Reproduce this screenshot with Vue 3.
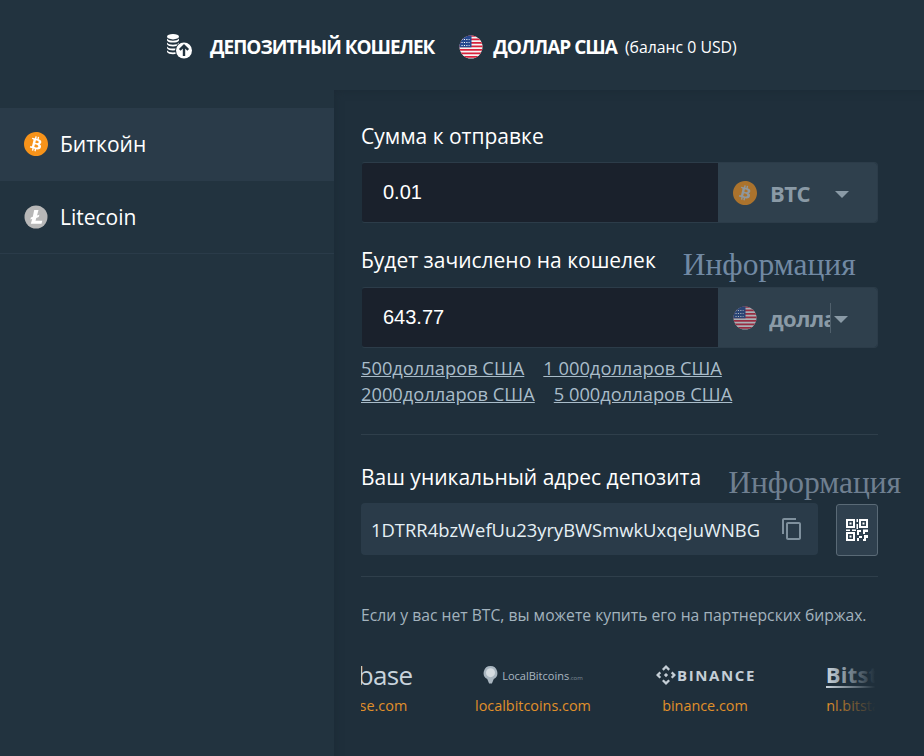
<script setup>
const exchanges = [
  { key: 'coinbase', url: 'coinbase.com' },
  { key: 'local', url: 'localbitcoins.com' },
  { key: 'binance', url: 'binance.com' },
  { key: 'bitstamp', url: 'nl.bitstamp.net' }
]
const stripes = [0, 1, 2, 3, 4, 5, 6]
const btc = 'M23.638 14.904c-1.602 6.43-8.113 10.34-14.542 8.736C2.67 22.05-1.244 15.525.362 9.105 1.962 2.67 8.475-1.243 14.9.358c6.43 1.605 10.342 8.115 8.738 14.548v-.002zm-6.35-4.613c.24-1.59-.974-2.45-2.64-3.03l.54-2.153-1.315-.33-.525 2.107c-.345-.087-.705-.167-1.064-.25l.526-2.127-1.32-.33-.54 2.165c-.285-.067-.565-.132-.84-.2l-1.815-.45-.35 1.407s.975.225.955.236c.535.136.63.486.615.766l-1.477 5.92c-.075.166-.24.406-.614.314.015.02-.96-.24-.96-.24l-.66 1.51 1.71.426.93.242-.54 2.19 1.32.327.54-2.17c.36.1.705.19 1.05.273l-.51 2.154 1.32.33.545-2.19c2.24.427 3.93.257 4.64-1.774.57-1.637-.03-2.58-1.217-3.196.854-.193 1.5-.76 1.68-1.93h.01zm-3.01 4.22c-.404 1.64-3.157.75-4.05.53l.72-2.9c.896.23 3.757.67 3.33 2.37zm.41-4.24c-.37 1.49-2.662.735-3.405.55l.654-2.64c.744.18 3.137.524 2.75 2.084v.006z'
</script>

<template>
  <div class="page">
    <header class="top">
      <svg class="coins" viewBox="0 0 26 26" width="26" height="26">
        <g fill="#fff">
          <ellipse cx="7" cy="2.700" rx="6" ry="2.700" />
          <path d="M1 4.600c1 1.500 3.200 2.200 6 2.200s5-.7 6-2.200v1.800c-1 1.500-3.200 2.200-6 2.200s-5-.7-6-2.200z" />
          <path d="M1 8.500c1 1.500 3.200 2.200 6 2.200s5-.7 6-2.200v1.800c-1 1.500-3.200 2.200-6 2.200s-5-.7-6-2.200z" />
          <path d="M1 12.400c1 1.500 3.200 2.200 6 2.200s5-.7 6-2.200v1.800c-1 1.500-3.200 2.200-6 2.200s-5-.7-6-2.200z" />
          <path d="M1 16.300c1 1.500 3.200 2.200 6 2.200s5-.7 6-2.200v1.800c-1 1.500-3.200 2.200-6 2.200s-5-.7-6-2.200z" />
        </g>
        <circle cx="18" cy="16.500" r="9" fill="#22333f" />
        <circle cx="18" cy="16.500" r="8" fill="#fff" />
        <path d="M18 22v-10M13.800 15.900l4.200-4.200 4.200 4.200" fill="none" stroke="#22333f" stroke-width="2.400" />
      </svg>
      <strong class="title">ДЕПОЗИТНЫЙ КОШЕЛЕК</strong>
      <svg class="flag" viewBox="0 0 24 24" width="24" height="24">
        <defs><clipPath id="flag-a"><circle cx="12" cy="12" r="11.500" /></clipPath></defs>
        <g clip-path="url(#flag-a)">
          <rect width="24" height="24" fill="#f5f5f5" />
          <rect v-for="s in stripes" :key="s" x="0" :y="s * 3.5" width="24" height="1.750" fill="#d8213b" />
          <rect width="12.500" height="12.300" fill="#27498f" />
          <path d="M2.500 4.500h8M2.500 7.500h8M2.500 10.500h8" stroke="#fff" stroke-width="1.100" stroke-dasharray="1.100 1.300" />
        </g>
      </svg>
      <strong class="currency">ДОЛЛАР США</strong>
      <span class="balance">(баланс 0 USD)</span>
    </header>

    <div class="body">
      <aside class="side">
        <div class="coin-row active">
          <svg viewBox="0 0 24 24" width="24" height="24">
            <circle cx="12" cy="12" r="10" fill="#fff" />
            <path :d="btc" fill="#f7931a" />
          </svg>
          <span>Биткойн</span>
        </div>
        <div class="coin-row">
          <svg viewBox="0 0 24 24" width="24" height="24">
            <circle cx="12" cy="12" r="11.500" fill="#b8b8b8" />
            <path d="M10.200 5h4.300l-1.500 5.600 2.400-.9-.7 2.300-2.400.9-.8 2.900h6.800l-.8 3H6.800l1.400-4.900-1.900.7.600-2.100 1.900-.7z" fill="#fff" />
          </svg>
          <span>Litecoin</span>
        </div>
      </aside>

      <main class="main">
        <label class="label first">Сумма к отправке</label>
        <div class="group">
          <div class="amount">0.01</div>
          <div class="picker">
            <svg viewBox="0 0 24 24" width="24" height="24">
              <circle cx="12" cy="12" r="10" fill="#c9cdd0" />
              <path :d="btc" fill="#f7931a" />
            </svg>
            <span class="code">BTC</span>
            <i class="caret"></i>
          </div>
        </div>

        <div class="label-row">
          <label class="label">Будет зачислено на кошелек</label>
          <span class="info">Информация</span>
        </div>
        <div class="group">
          <div class="amount second">643.77</div>
          <div class="picker">
            <svg viewBox="0 0 24 24" width="24" height="24">
              <defs><clipPath id="flag-b"><circle cx="12" cy="12" r="11.500" /></clipPath></defs>
              <g clip-path="url(#flag-b)">
                <rect width="24" height="24" fill="#f5f5f5" />
                <rect v-for="s in stripes" :key="s" x="0" :y="s * 3.5" width="24" height="1.750" fill="#d8213b" />
                <rect width="12.500" height="12.300" fill="#27498f" />
                <path d="M2.500 4.500h8M2.500 7.500h8M2.500 10.500h8" stroke="#fff" stroke-width="1.100" stroke-dasharray="1.100 1.300" />
              </g>
            </svg>
            <span class="code clip">долла</span>
            <i class="caret near"></i>
          </div>
        </div>

        <div class="presets">
          <div class="preset-line"><a>500долларов США</a><a>1 000долларов США</a></div>
          <div class="preset-line"><a>2000долларов США</a><a>5 000долларов США</a></div>
        </div>

        <hr class="rule one" />

        <div class="label-row third">
          <label class="label">Ваш уникальный адрес депозита</label>
          <span class="info dim">Информация</span>
        </div>
        <div class="address-row">
          <div class="address">
            <span>1DTRR4bzWefUu23yryBWSmwkUxqeJuWNBG</span>
            <svg viewBox="0 0 24 24" width="24" height="24">
              <path fill="#7f909d" d="M16 1H4c-1.100 0-2 .9-2 2v14h2V3h12V1zm3 4H8c-1.100 0-2 .9-2 2v14c0 1.100.9 2 2 2h11c1.100 0 2-.9 2-2V7c0-1.100-.9-2-2-2zm0 16H8V7h11v14z" />
            </svg>
          </div>
          <button class="qr" type="button">
            <svg viewBox="0 0 24 24" width="24" height="24" fill="#fff">
              <path fill-rule="evenodd" d="M1 1h9v9H1zm2 2v5h5V3zM14 1h9v9h-9zm2 2v5h5V3zM1 14h9v9H1zm2 2v5h5v-5z" />
              <path d="M4.500 4.500h2v2h-2zM17.500 4.500h2v2h-2zM4.500 17.500h2v2h-2zM11.500 1h1.500v3h-1.500zM11.500 6h1.500v5h-1.500zM1 11.500h4v1.500H1zM7 11.500h4v1.500H7zM12 12h4v2h-2v3h-2zM18 11.500h5v2.500h-3v2h-2zM14 18h3v2h-3zM19 17h4v3h-2v3h-3v-2h1zM12 20h2v3h-2z" />
            </svg>
          </button>
        </div>

        <hr class="rule two" />

        <p class="note">Если у вас нет BTC, вы можете купить его на партнерских биржах.</p>

        <div class="carousel">
          <div class="track">
            <div v-for="ex in exchanges" :key="ex.key" class="slide">
              <div class="logo">
                <span v-if="ex.key === 'coinbase'" class="coinbase">coinbase</span>
                <span v-else-if="ex.key === 'local'" class="local">
                  <svg viewBox="0 0 16 20" width="15" height="20">
                    <path d="M8 .5a7.300 7.300 0 0 0-3.500 13.700L6.500 19h3l2-4.800A7.300 7.300 0 0 0 8 .5z" fill="#a9b6c0" />
                    <circle cx="8" cy="7.500" r="4.800" fill="#d5dce1" />
                  </svg>
                  <span>LocalBitcoins<small>.com</small></span>
                </span>
                <span v-else-if="ex.key === 'binance'" class="binance">
                  <svg viewBox="2 2 16 16" width="20" height="20" fill="#c4ced6">
                    <path d="M10 2l3.200 3.200-1.300 1.300L10 4.600 8.100 6.500 6.800 5.200zM4.800 7.200L6.100 8.500 4.600 10l1.500 1.500-1.300 1.300L2 10zM15.200 7.200L18 10l-2.800 2.800-1.300-1.300 1.500-1.500-1.500-1.500zM10 8.300l1.700 1.700-1.700 1.700L8.300 10zM8.100 13.500L10 15.400l1.900-1.900 1.300 1.300L10 18l-3.200-3.200z" />
                  </svg>
                  <span>BINANCE</span>
                </span>
                <span v-else class="bitstamp">Bitstamp</span>
              </div>
              <a class="site">{{ ex.url }}</a>
            </div>
          </div>
          <div class="fade"></div>
        </div>
      </main>
    </div>
  </div>
</template>

<style scoped>
.page {
  width: 924px;
  height: 756px;
  overflow: hidden;
  display: flex;
  flex-direction: column;
  background: #22333f;
  color: #fff;
  font-family: "Open Sans", "Noto Sans", sans-serif;
}
.top {
  height: 90px;
  flex: none;
  display: flex;
  align-items: center;
  padding: 4px 0 0 166px;
  box-sizing: border-box;
}
.coins { margin-right: 18px; margin-top: -1px; }
.title, .currency {
  font-size: 19px;
  font-weight: 700;
  letter-spacing: -1px;
  line-height: 24px;
}
.flag { margin: 0 10px 0 25px; }
.balance { font-size: 15.800px; margin-left: 8px; }
.body { flex: 1; display: flex; min-height: 0; }
.side { width: 334px; flex: none; padding-top: 18px; box-sizing: border-box; }
.coin-row {
  height: 73px;
  display: flex;
  align-items: center;
  gap: 12px;
  padding: 0 0 1px 24px;
  font-size: 21px;
  box-sizing: border-box;
}
.coin-row.active { background: #2a3b49; padding-bottom: 2px; }
.coin-row:last-child { border-bottom: 1px solid #2a3b49; }
.main {
  flex: 1;
  min-width: 0;
  padding: 33px 46px 0 27px;
  background: #1f2f3b;
  box-shadow: inset 10px 10px 10px -10px #1c2a35;
  box-sizing: border-box;
}
.label {
  display: block;
  font-size: 21px;
  line-height: 28px;
  white-space: nowrap;
  color: #fff;
}
.first { line-height: 26px; margin-bottom: 13px; }
.label-row {
  display: flex;
  align-items: flex-start;
  gap: 27px;
  height: 28px;
  margin: 23px 0 13px;
  white-space: nowrap;
}
.third { margin: 28px 0 12px; }
.info {
  font-family: "Liberation Serif", serif;
  font-size: 31.500px;
  color: #7189a3;
  line-height: 28px;
  margin-top: 5px;
}
.info.dim { color: #6f7f90; margin-top: 6px; }
.group {
  height: 61px;
  display: flex;
  box-sizing: border-box;
  border-radius: 4px;
  overflow: hidden;
  border: 1px solid #2c3c49;
  border-left-color: #1f2f3b;
}
.amount {
  flex: 1;
  background: #1a212c;
  font-family: "Liberation Sans", sans-serif;
  font-size: 20px;
  line-height: 58px;
  padding-left: 21px;
}
.picker {
  width: 159px;
  flex: none;
  display: flex;
  align-items: center;
  background: #2f404d;
  padding-left: 15px;
  box-sizing: border-box;
}
.picker svg { opacity: 0.62; flex: none; }
.code {
  margin-left: 13px;
  font-size: 22px;
  font-weight: 700;
  letter-spacing: -0.5px;
  color: #8a9aa6;
  white-space: nowrap;
}
.code.clip {
  width: 62px;
  overflow: hidden;
  border-right: 1px solid #50606c;
  line-height: 30px;
  box-sizing: border-box;
  margin-left: 12px;
}
.caret {
  width: 0;
  height: 0;
  border-left: 7px solid transparent;
  border-right: 7px solid transparent;
  border-top: 7px solid #8a9aa6;
  margin: 3px 0 0 25px;
}
.caret.near { margin-left: 3px; }
.presets { margin-top: 7px; }
.preset-line { display: flex; gap: 19px; line-height: 26px; font-size: 18.300px; }
.preset-line a { color: #a9bcc9; text-decoration: underline; white-space: nowrap; }
.rule { border: 0; height: 1px; margin: 0; background: #2f3f4b; }
.one { margin-top: 27px; }
.two { margin-top: 20px; }
.address-row { display: flex; justify-content: space-between; align-items: flex-start; }
.address {
  width: 457px;
  height: 52px;
  display: flex;
  align-items: center;
  justify-content: space-between;
  background: #2a3b49;
  border-radius: 4px;
  padding: 0 14px 0 10px;
  box-sizing: border-box;
  font-size: 18.400px;
  color: #e6f0f5;
}
.qr {
  width: 42px;
  height: 52px;
  margin-top: 1px;
  padding: 0;
  display: flex;
  align-items: center;
  justify-content: center;
  background: #2f404e;
  border: 1px solid #5a6a76;
  border-radius: 3px;
}
.note {
  margin: 28px 0 0;
  font-size: 15.700px;
  line-height: 20px;
  color: #a3b3be;
  white-space: nowrap;
}
.carousel {
  position: relative;
  margin-top: 33px;
  overflow: hidden;
  width: 517px;
}
.track { display: flex; margin-left: -86px; width: 688px; }
.slide {
  width: 172px;
  flex: none;
  display: flex;
  flex-direction: column;
  align-items: center;
}
.logo {
  height: 34px;
  display: flex;
  align-items: center;
  justify-content: center;
  color: #c4ced6;
}
.site {
  margin-top: 4px;
  font-size: 14.400px;
  line-height: 20px;
  color: #e0902a;
  white-space: nowrap;
}
.coinbase { font-size: 26px; letter-spacing: -0.6px; color: #c8d3dc; }
.local {
  display: flex;
  align-items: center;
  gap: 4px;
  font-size: 11px;
  color: #a9b6c0;
}
.local small { font-size: 6px; color: #7f8e99; }
.binance {
  display: flex;
  align-items: center;
  gap: 1px;
  padding-left: 2px;
  font-size: 15px;
  font-weight: 700;
  letter-spacing: 1.600px;
}
.bitstamp {
  font-size: 22px;
  font-weight: 700;
  border-bottom: 2px solid #c4ced6;
  line-height: 24px;
  letter-spacing: 0.300px;
}
.fade {
  position: absolute;
  top: 0;
  bottom: 0;
  right: 0;
  width: 50px;
  background: linear-gradient(to right, rgba(31, 47, 59, 0), #1f2f3b 95%);
}
</style>
